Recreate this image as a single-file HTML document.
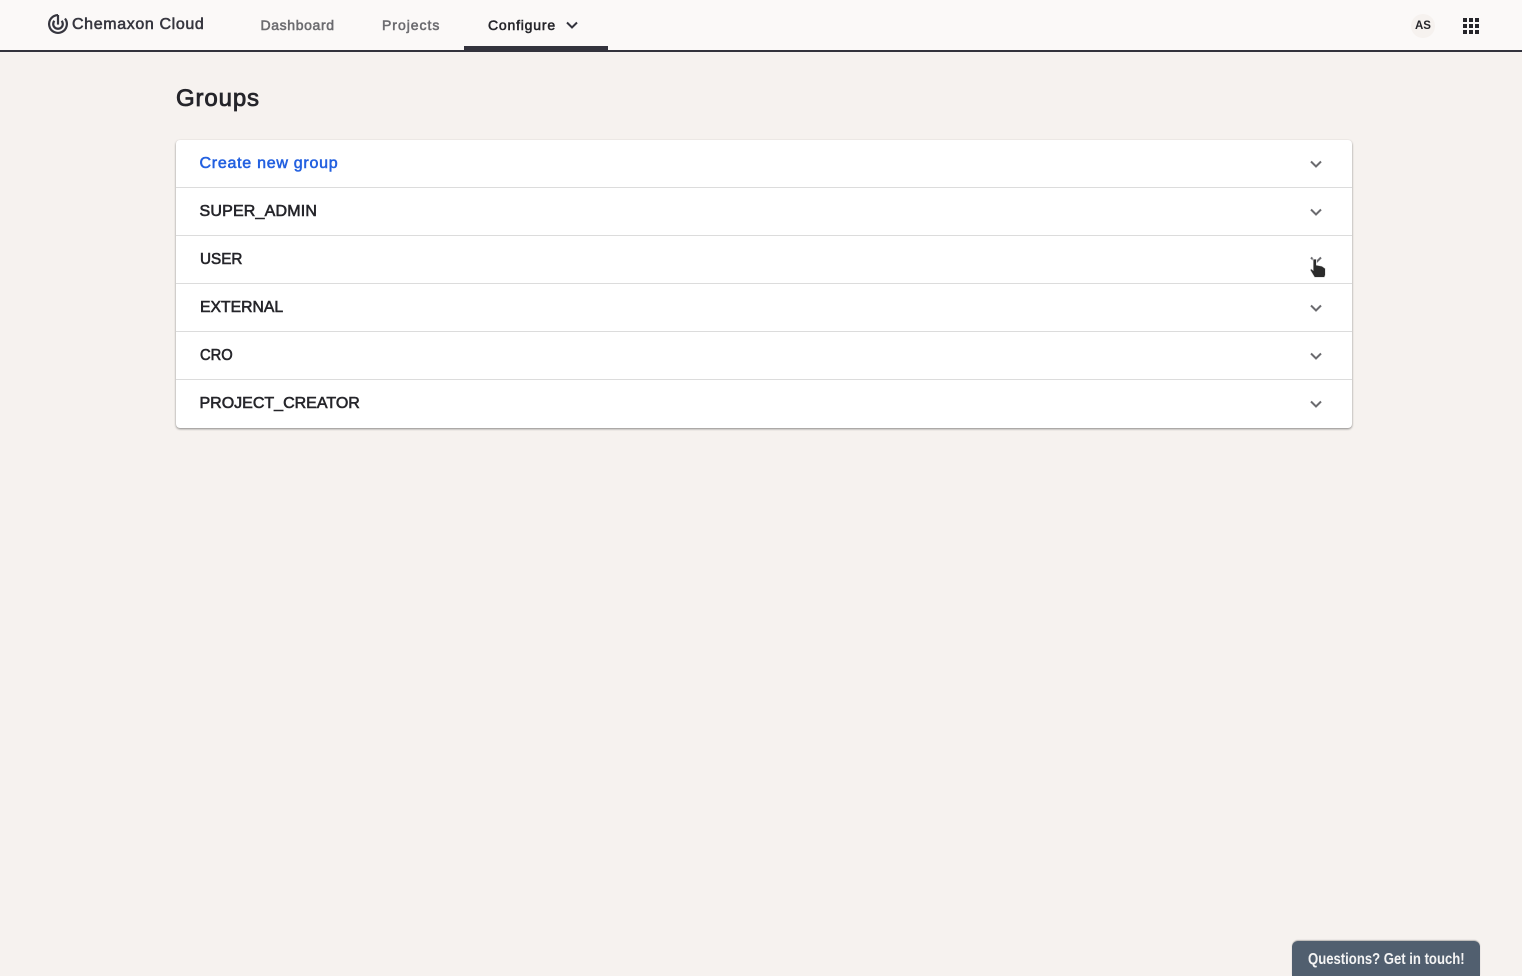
<!DOCTYPE html>
<html><head><meta charset="utf-8"><title>Groups</title>
<style>
html,body{margin:0;padding:0;width:1522px;height:976px;overflow:hidden;background:#f6f2ef;font-family:"Liberation Sans",sans-serif;}
.t{position:absolute;white-space:nowrap;line-height:20px;-webkit-text-stroke:.55px currentColor;transform-origin:0 50%;}
#hdr{position:absolute;left:0;top:0;width:1522px;height:50px;background:#fbf9f8;border-bottom:2px solid #33333d;}
#card{position:absolute;left:176px;top:140px;width:1176px;height:288px;background:#fff;border-radius:4px;box-shadow:0 1px 2px rgba(0,0,0,.45);}
.ln{position:absolute;left:176px;width:1176px;height:1px;background:#dcdcdc;}
.rt{font-size:16px;left:199.5px;color:#25252a;-webkit-text-stroke:.6px #25252a;}
svg{position:absolute;overflow:visible;}
</style></head><body>
<div id="hdr"></div>
<div style="position:absolute;left:464px;top:46px;width:144px;height:6px;background:#33333d"></div>

<svg style="left:48px;top:14px" width="20" height="20" viewBox="0 0 20 20" fill="none" stroke="#36363f" stroke-width="2.2">
<path d="M10 1.1A8.9 8.9 0 1 0 17 4.5"/>
<path d="M6.4 6.8A4.8 4.8 0 1 0 13.6 6.8"/>
<path d="M10 1v9.6"/>
</svg>
<div class="t" style="left:72px;top:15px;font-size:16px;color:#36363f;letter-spacing:.63px">Chemaxon Cloud</div>
<div class="t" style="left:260.5px;top:15px;font-size:14px;color:#6b6b6f;letter-spacing:.63px">Dashboard</div>
<div class="t" style="left:382px;top:15px;font-size:14px;color:#6b6b6f;letter-spacing:.97px">Projects</div>
<div class="t" style="left:488px;top:15px;font-size:14px;color:#25252a;letter-spacing:.8px">Configure</div>
<svg style="left:564px;top:20px" width="16" height="12" fill="none" stroke="#33333d" stroke-width="2"><path d="M3 2.5L8 7.5L13 2.5"/></svg>

<div style="position:absolute;left:1411px;top:14px;width:24px;height:24px;border-radius:50%;background:#f6f2ef"></div>
<div class="t" style="left:1415px;top:16px;font-size:11.5px;font-weight:bold;-webkit-text-stroke:0;color:#25252a">AS</div>
<svg style="left:1463px;top:18px" width="16" height="16" fill="#25252a">
<rect x="0" y="0" width="4" height="4"/><rect x="6" y="0" width="4" height="4"/><rect x="12" y="0" width="4" height="4"/>
<rect x="0" y="6" width="4" height="4"/><rect x="6" y="6" width="4" height="4"/><rect x="12" y="6" width="4" height="4"/>
<rect x="0" y="12" width="4" height="4"/><rect x="6" y="12" width="4" height="4"/><rect x="12" y="12" width="4" height="4"/>
</svg>

<div class="t" style="left:176px;top:86px;font-size:24px;line-height:26px;color:#25252a;letter-spacing:.87px;-webkit-text-stroke:.8px #25252a">Groups</div>

<div id="card"></div>
<div class="ln" style="top:187px"></div>
<div class="ln" style="top:235px"></div>
<div class="ln" style="top:283px"></div>
<div class="ln" style="top:331px"></div>
<div class="ln" style="top:379px"></div>

<div class="t rt" style="top:154px;color:#2360e0;-webkit-text-stroke:.55px #2360e0;letter-spacing:.73px">Create new group</div>
<div class="t rt" style="top:202px;letter-spacing:.18px">SUPER_ADMIN</div>
<div class="t rt" style="top:250px;transform:scaleX(.955)">USER</div>
<div class="t rt" style="top:298px;transform:scaleX(.985)">EXTERNAL</div>
<div class="t rt" style="top:346px;transform:scaleX(.92)">CRO</div>
<div class="t rt" style="top:394px">PROJECT_CREATOR</div>

<svg style="left:1308px;top:156px" width="16" height="256" fill="none" stroke="#6b6b6f" stroke-width="2">
<path d="M3 5.5L8 10.5L13 5.5"/>
<path d="M3 53.5L8 58.5L13 53.5"/>
<path d="M3 101.5L8 106.5L13 101.5"/>
<path d="M3 149.5L8 154.5L13 149.5"/>
<path d="M3 197.5L8 202.5L13 197.5"/>
<path d="M3 245.5L8 250.5L13 245.5"/>
</svg>

<svg style="left:1309px;top:258px" width="18" height="22" viewBox="0 0 18 22">
<path d="M4 1V12L2 10.5L1 12L5.5 19.5H15.5L16.5 17V10.5L13 8L7.5 7V1Z" fill="#2b2b2b" stroke="#fff" stroke-width="1" stroke-opacity=".8"/>
</svg>

<div style="position:absolute;left:1292px;top:941px;width:188px;height:35px;background:#515f6f;border-radius:6px 6px 0 0;box-shadow:0 -1px 1px rgba(0,0,0,.25)"></div>
<div class="t" style="left:1308px;top:950px;font-size:15.5px;font-weight:bold;color:#f4f4f4;-webkit-text-stroke:0;transform:scaleX(.846)">Questions? Get in touch!</div>
</body></html>
